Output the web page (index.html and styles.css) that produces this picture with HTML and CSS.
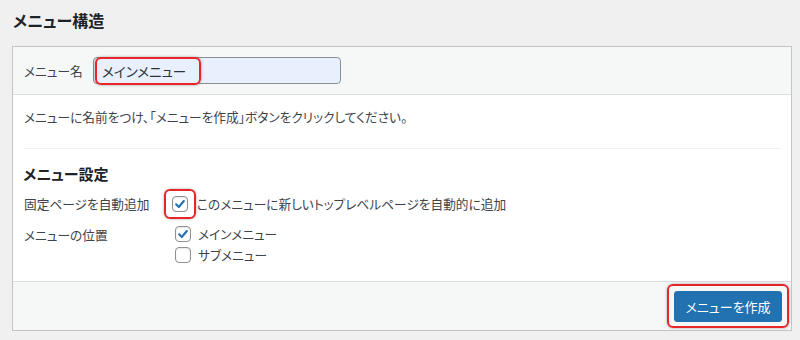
FILE: index.html
```html
<!DOCTYPE html>
<html lang="ja">
<head>
    <meta charset="UTF-8">
    <title>メニュー構造</title>
    <link rel="stylesheet" href="styles.css">
</head>
<body>
    <h2 class="page-title">メニュー構造</h2>

    <div class="menu-box">
        <div class="menu-header">
            <label class="name-label">メニュー名</label>
            <div class="name-input">
                <span class="mark mark-input">メインメニュー</span>
            </div>
        </div>

        <div class="menu-body">
            <p class="desc">メニューに名前をつけ、「メニューを作成」ボタンをクリックしてください。</p>
            <div class="divider"></div>

            <h3 class="settings-title">メニュー設定</h3>

            <div class="setting-row row-auto">
                <div class="setting-label">固定ページを自動追加</div>
                <div class="setting-field">
                    <span class="mark mark-check">
                        <span class="checkbox checked">
                            <svg viewBox="0 0 16 16"><path d="M3.6 8.4l3 3 5.8-6.8" /></svg>
                        </span>
                    </span>
                    <span class="opt-text">このメニューに新しいトップレベルページを自動的に追加</span>
                </div>
            </div>

            <div class="setting-row row-loc">
                <div class="setting-label">メニューの位置</div>
                <div class="setting-field stack">
                    <div class="opt">
                        <span class="checkbox checked">
                            <svg viewBox="0 0 16 16"><path d="M3.6 8.4l3 3 5.8-6.8" /></svg>
                        </span>
                        <span class="opt-text">メインメニュー</span>
                    </div>
                    <div class="opt">
                        <span class="checkbox"></span>
                        <span class="opt-text">サブメニュー</span>
                    </div>
                </div>
            </div>
        </div>

        <div class="menu-footer">
            <span class="mark mark-btn">
                <button class="btn-primary">メニューを作成</button>
            </span>
        </div>
    </div>
</body>
</html>
```

FILE: styles.css
```css
* {
    margin: 0;
    padding: 0;
    box-sizing: border-box;
}

body {
    font-family: "Noto Sans CJK JP", "Noto Sans", sans-serif;
    font-feature-settings: "palt";
    font-size: 12.7px;
    color: #3c434a;
    background: #f0f0f1;
    padding: 10px 9px 0 12px;
}

.page-title {
    font-size: 16px;
    font-weight: bold;
    color: #1d2327;
    line-height: 20px;
    height: 36px;
    padding-left: 1px;
}

.menu-box {
    width: 780px;
    border: 1px solid #c3c4c7;
    background: #fff;
}

.menu-header {
    display: flex;
    align-items: center;
    height: 48px;
    padding: 0 10px;
    background: #f6f7f7;
    border-bottom: 1px solid #dcdcde;
}

.name-label {
    width: 70px;
    padding-left: 1px;
}

.name-input {
    position: relative;
    width: 248px;
    height: 27px;
    background: #e8f0fe;
    border: 1px solid #8c8f94;
    border-radius: 4px;
}

.mark {
    border: 2px solid #e8262a;
    border-radius: 6px;
    box-shadow: 0 0 3px rgba(0, 0, 0, 0.35);
}

.mark-input {
    position: absolute;
    left: 1px;
    top: -1px;
    height: 28px;
    width: 106px;
    display: flex;
    align-items: center;
    padding-left: 5px;
    font-size: 13.5px;
    white-space: nowrap;
    color: #2c3338;
}

.menu-body {
    padding: 0 10px 0 10px;
    height: 186px;
}

.desc {
    line-height: 20px;
    padding-top: 12px;
    padding-left: 1px;
}

.divider {
    margin-top: 21px;
    border-top: 1px solid #f0f0f1;
}

.settings-title {
    font-size: 15px;
    font-weight: bold;
    color: #1d2327;
    line-height: 20px;
    margin-top: 15px;
}

.setting-row {
    display: flex;
}

.row-auto {
    margin-top: 5px;
    align-items: center;
}

.row-loc {
    margin-top: 6px;
}

.setting-label {
    width: 152px;
    padding-left: 1px;
    line-height: 20px;
}

.setting-field {
    display: flex;
    align-items: center;
}

.stack {
    flex-direction: column;
    align-items: flex-start;
    gap: 3px;
}

.opt {
    display: flex;
    align-items: center;
    height: 18px;
}

.mark-check {
    display: flex;
    align-items: center;
    justify-content: center;
    width: 32px;
    height: 30px;
    margin-left: -11px;
    margin-right: 1px;
}

.checkbox {
    display: inline-block;
    width: 16px;
    height: 16px;
    border: 1px solid #8c8f94;
    border-radius: 4px;
    background: #fff;
    box-shadow: inset 0 1px 2px rgba(0, 0, 0, 0.1);
}

.checkbox svg {
    display: block;
    width: 14px;
    height: 14px;
    fill: none;
    stroke: #2271b1;
    stroke-width: 2.4;
    stroke-linecap: round;
    stroke-linejoin: round;
}

.opt .checkbox {
    margin-right: 7px;
}

.opt-text {
    line-height: 18px;
}

.menu-footer {
    display: flex;
    justify-content: flex-end;
    align-items: center;
    height: 49px;
    padding-right: 2px;
    background: #f6f7f7;
    border-top: 1px solid #dcdcde;
}

.mark-btn {
    display: flex;
    align-items: center;
    justify-content: center;
    width: 122px;
    height: 44px;
}

.btn-primary {
    font-family: inherit;
    font-feature-settings: "palt";
    font-size: 13px;
    color: #fff;
    background: #2271b1;
    border: 1px solid #2271b1;
    border-radius: 3px;
    width: 108px;
    height: 31px;
}
```
